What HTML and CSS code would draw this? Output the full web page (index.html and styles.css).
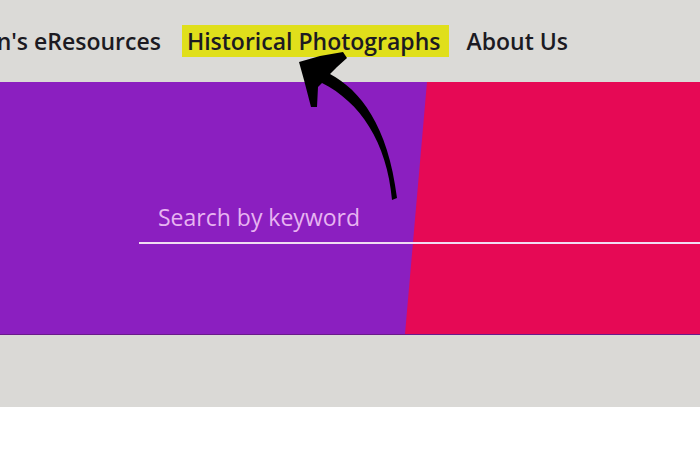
FILE: index.html
```html
<!DOCTYPE html>
<html lang="en">
<head>
<meta charset="utf-8">
<title>Library</title>
<link rel="stylesheet" href="styles.css">
</head>
<body>
<div class="page">
  <header class="topbar">
    <nav class="nav">
      <a class="nav-link" href="#">Women's eResources</a>
      <a class="nav-link highlight" href="#">Historical Photographs</a>
      <a class="nav-link" href="#">About Us</a>
    </nav>
  </header>
  <section class="hero">
    <div class="search">
      <span class="search-placeholder">Search by keyword</span>
    </div>
  </section>
  <div class="band"></div>
  <svg class="arrow" width="700" height="465" viewBox="0 0 700 465" aria-hidden="true">
    <path d="M299,62 L320,56 L343,52 L347,58 L337,67 L330,74 C360,90 388,125 397,198 L392,200 C387,142 360,102 322,83 L318,87 L317,107 L311,107 L304,80 Z" fill="#000"/>
  </svg>
</div>
</body>
</html>
```
FILE: styles.css
```css
html, body {
  margin: 0;
  padding: 0;
  background: #ffffff;
}
.page {
  position: relative;
  width: 700px;
  height: 465px;
  overflow: hidden;
  font-family: "Open Sans", "Noto Sans", sans-serif;
}
.topbar {
  height: 82px;
  background: #dbdad7;
  display: flex;
  align-items: center;
  overflow: hidden;
}
.nav {
  display: flex;
  align-items: center;
  justify-content: flex-end;
  gap: 13px;
  width: 100%;
  padding-right: 128px;
  box-sizing: border-box;
  white-space: nowrap;
}
.nav-link {
  font-size: 23px;
  line-height: 28px;
  font-weight: 600;
  color: #1c1a22;
  text-decoration: none;
  padding: 2px 4px;
}
.nav-link.highlight {
  background: #e0df1b;
  margin-left: 4px;
  padding: 2px 9px 2px 5px;
}
.hero {
  position: relative;
  height: 253px;
  background: #8b1fc0;
  display: flex;
  align-items: flex-end;
  padding-bottom: 90px;
  box-sizing: border-box;
  border-bottom: 1px solid #6a1a8a;
}
.hero::before {
  content: "";
  position: absolute;
  inset: 0;
  background: #e60955;
  clip-path: polygon(427px 0, 100% 0, 100% 100%, 405px 100%);
}
.search {
  position: relative;
  margin-left: 139px;
  flex: 1;
  border-bottom: 2px solid #f1dcf2;
  padding: 0 0 9px 19px;
}
.search-placeholder {
  font-size: 23px;
  color: #e7b4f1;
}
.band {
  height: 72px;
  background: #dad9d6;
}
.arrow {
  position: absolute;
  left: 0;
  top: 0;
  pointer-events: none;
}
```
